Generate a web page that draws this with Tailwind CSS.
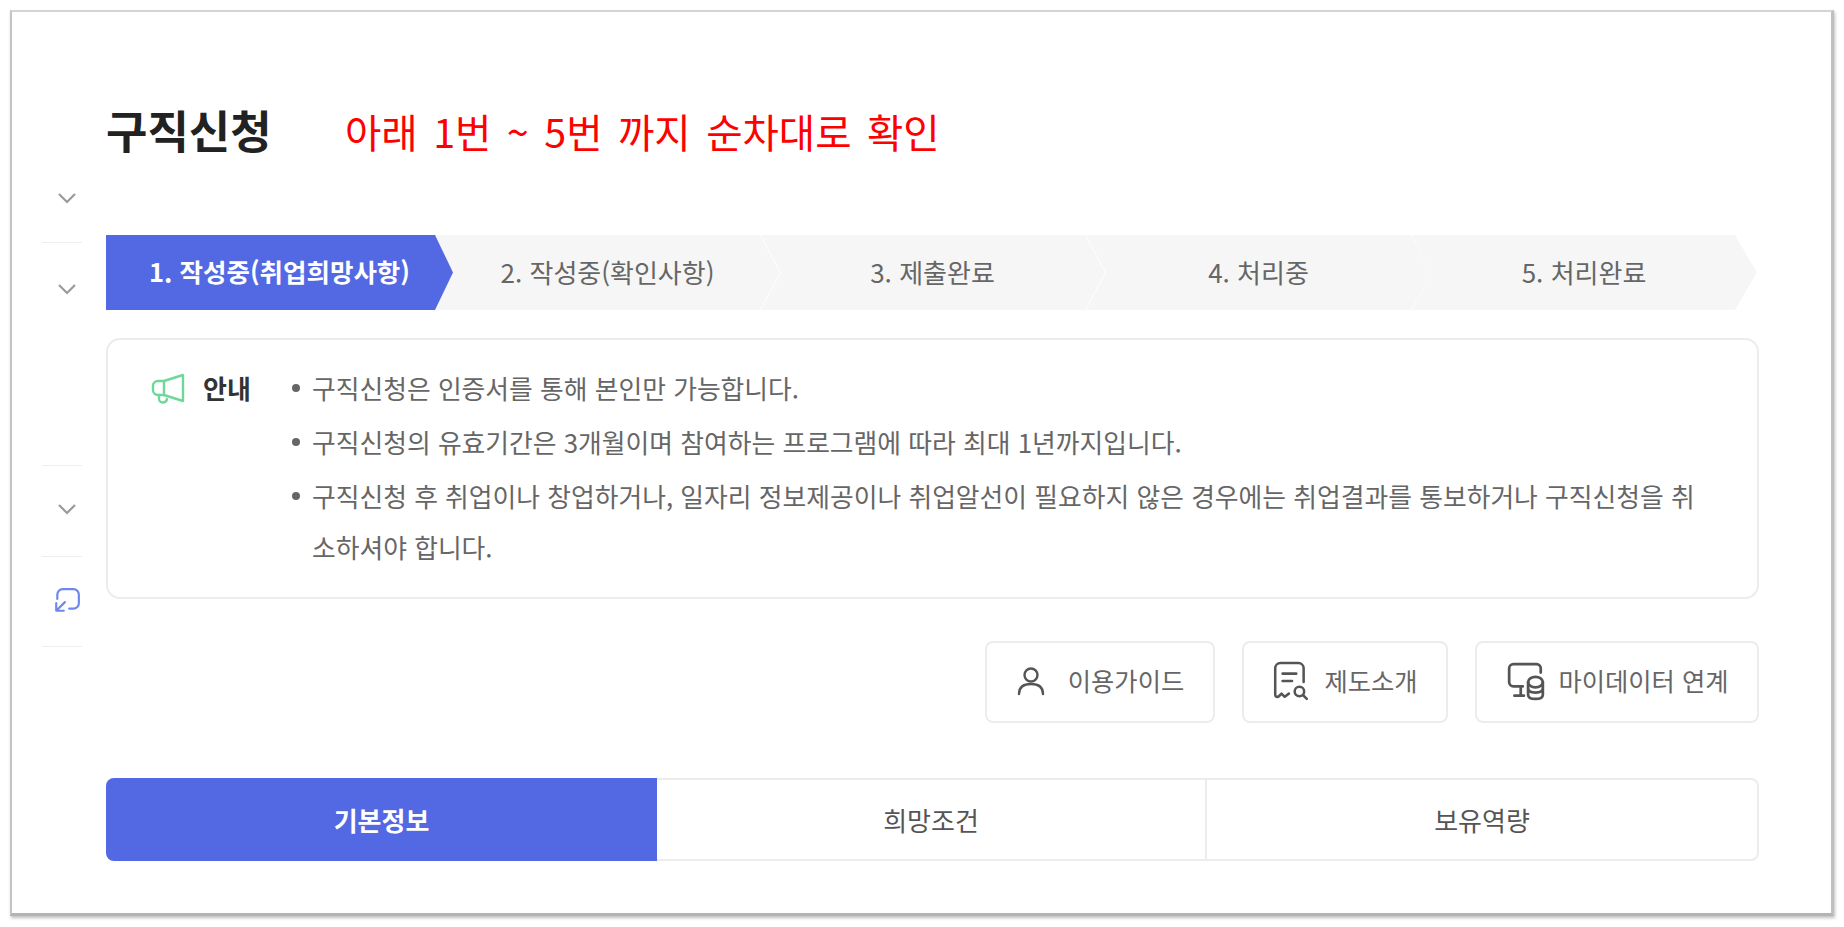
<!doctype html>
<html lang="ko">
<head>
<meta charset="utf-8">
<script src="https://cdn.jsdelivr.net/npm/@tailwindcss/browser@4"></script>
</head>
<body class="bg-white font-['Noto_Sans_CJK_KR','Noto_Sans',sans-serif]">
<div class="p-[10px] h-[927px] overflow-hidden">
  <div class="w-[1824px] h-[906px] bg-white border-t-2 border-l-2 border-r-[3px] border-b-[3px] border-t-[#d4d4d4] border-l-[#c4c4c4] border-r-[#c0c0c0] border-b-[#b4b4b4] shadow-[1px_2px_3px_rgba(0,0,0,0.25)] flex">
    <aside class="w-[40px] ml-[30px] mt-[140px] flex flex-col shrink-0">
      <div class="h-[91px] border-b border-[#eeeeee] flex justify-center pl-[9px] pt-[40px]">
        <svg class="w-[18px] h-[12px]" viewBox="0 0 18 12" fill="none" stroke="#9a9a9a" stroke-width="2.2"><path d="M1 2l8 8 8-8"/></svg>
      </div>
      <div class="h-[223px] border-b border-[#eeeeee] flex justify-center pl-[9px] pt-[40px]">
        <svg class="w-[18px] h-[12px]" viewBox="0 0 18 12" fill="none" stroke="#9a9a9a" stroke-width="2.2"><path d="M1 2l8 8 8-8"/></svg>
      </div>
      <div class="h-[91px] border-b border-[#eeeeee] flex justify-center pl-[9px] pt-[37px]">
        <svg class="w-[18px] h-[12px]" viewBox="0 0 18 12" fill="none" stroke="#9a9a9a" stroke-width="2.2"><path d="M1 2l8 8 8-8"/></svg>
      </div>
      <div class="h-[90px] border-b border-[#eeeeee] flex justify-center pl-[9px] pt-[30px]">
        <svg class="w-[28px] h-[27px]" viewBox="0 0 26 25" fill="none" stroke="#6f86ee" stroke-width="2" stroke-linecap="round" stroke-linejoin="round"><path d="M4 11V7a5 5 0 0 1 5-5h10a5 5 0 0 1 5 5v8a5 5 0 0 1-5 5h-4"/><path d="M11 14l-8 8M3 15v7h7"/></svg>
      </div>
    </aside>
    <main class="w-[1653px] ml-[24px] shrink-0">
      <div class="mt-[93px] h-[52px] flex items-center">
        <h1 class="w-[239px] text-[45px] leading-[52px] font-semibold text-[#222222] -mt-[2px]">구직신청</h1>
        <p class="text-[39.5px] leading-[52px] text-[#ff0000] whitespace-nowrap [word-spacing:4.4px]">아래 1번 ~ 5번 까지 순차대로 확인</p>
      </div>
      <ol class="mt-[78px] h-[75px] flex text-[26px] text-[#666666]">
        <li class="relative z-[5] w-[347px] pb-[2px] flex items-center justify-center bg-[#5369e3] text-white text-[25.5px] font-bold [clip-path:polygon(0_0,329px_0,100%_50%,329px_100%,0_100%)]">1. 작성중(취업희망사항)</li>
        <li class="relative z-[4] w-[345px] -ml-[18px] pb-[2px] flex items-center justify-center bg-[#f6f6f6] [clip-path:polygon(0_0,325px_0,100%_50%,325px_100%,0_100%)]">2. 작성중(확인사항)</li>
        <li class="relative z-[3] w-[345px] -ml-[20px] pb-[2px] flex items-center justify-center bg-[#f6f6f6] [clip-path:polygon(0_0,325px_0,100%_50%,325px_100%,0_100%)]"><span>3. 제출완료</span>
          <svg class="absolute left-0 top-0 w-[22px] h-[75px]" viewBox="0 0 22 75" fill="none" stroke="#ffffff" stroke-width="1.5"><path d="M0 0l20 37.5L0 75"/></svg></li>
        <li class="relative z-[2] w-[347px] -ml-[20px] pb-[2px] flex items-center justify-center bg-[#f6f6f6] [clip-path:polygon(0_0,326px_0,100%_50%,326px_100%,0_100%)]"><span>4. 처리중</span>
          <svg class="absolute left-0 top-0 w-[22px] h-[75px]" viewBox="0 0 22 75" fill="none" stroke="#ffffff" stroke-width="1.5"><path d="M0 0l20 37.5L0 75"/></svg></li>
        <li class="relative z-[1] w-[346px] -ml-[21px] pb-[2px] flex items-center justify-center bg-[#f6f6f6] [clip-path:polygon(0_0,324px_0,100%_50%,324px_100%,0_100%)]"><span>5. 처리완료</span>
          <svg class="absolute left-0 top-0 w-[22px] h-[75px]" viewBox="0 0 22 75" fill="none" stroke="#ffffff" stroke-width="1.5"><path d="M0 0l20 37.5L0 75"/></svg></li>
      </ol>
      <section class="mt-[28px] h-[261px] border-2 border-[#ececec] rounded-[14px] flex pt-[22px]">
        <div class="w-[184px] shrink-0 flex items-start pl-[42px] h-[51px]">
          <svg class="w-[36px] h-[36px] mt-[10px]" viewBox="0 0 36 36" fill="none" stroke="#6fd79a" stroke-width="2.4" stroke-linejoin="round" stroke-linecap="round"><path d="M33 3v26L14 23H8a5 5 0 0 1-5-5v-4a5 5 0 0 1 5-5h6z"/><path d="M14 9v14M9 23v3a4 4 0 0 0 8 1"/></svg>
          <strong class="ml-[17px] text-[26px] leading-[51px] font-bold text-[#333333]">안내</strong>
        </div>
        <ul class="flex-1 pr-[50px] text-[25.8px] leading-[51px] text-[#666666] flex flex-col gap-[3px]">
          <li class="relative pl-[20px] before:content-[''] before:absolute before:left-0 before:top-[22px] before:w-[8px] before:h-[8px] before:rounded-full before:bg-[#666666]">구직신청은 인증서를 통해 본인만 가능합니다.</li>
          <li class="relative pl-[20px] before:content-[''] before:absolute before:left-0 before:top-[22px] before:w-[8px] before:h-[8px] before:rounded-full before:bg-[#666666]">구직신청의 유효기간은 3개월이며 참여하는 프로그램에 따라 최대 1년까지입니다.</li>
          <li class="relative pl-[20px] before:content-[''] before:absolute before:left-0 before:top-[22px] before:w-[8px] before:h-[8px] before:rounded-full before:bg-[#666666]">구직신청 후 취업이나 창업하거나, 일자리 정보제공이나 취업알선이 필요하지 않은 경우에는 취업결과를 통보하거나 구직신청을 취소하셔야 합니다.</li>
        </ul>
      </section>
      <div class="mt-[42px] flex justify-end gap-[27px] text-[25.3px] text-[#666666]">
        <a class="w-[230px] h-[82px] pb-[2px] border-2 border-[#ececec] rounded-[8px] flex items-center justify-center gap-[22px]">
          <svg class="w-[30px] h-[30px]" viewBox="0 0 30 30" fill="none" stroke="#555555" stroke-width="2.4" stroke-linecap="round"><circle cx="15" cy="9" r="6.5"/><path d="M3 28c0-7 5-10 12-10s12 3 12 10"/></svg>
          이용가이드
        </a>
        <a class="w-[206px] h-[82px] pb-[2px] border-2 border-[#ececec] rounded-[8px] flex items-center justify-center gap-[14px]">
          <svg class="w-[38px] h-[40px]" viewBox="0 0 36 38" fill="none" stroke="#555555" stroke-width="2.4" stroke-linecap="round" stroke-linejoin="round"><path d="M30 20V7a5 5 0 0 0-5-5H8a5 5 0 0 0-5 5v25c0 2 2 3 4 1l2-2 3 3 4-3"/><path d="M10 12h13M10 19h9"/><circle cx="26" cy="29" r="4.5"/><path d="M30 33l3 3"/></svg>
          제도소개
        </a>
        <a class="w-[284px] h-[82px] pb-[2px] border-2 border-[#ececec] rounded-[8px] flex items-center justify-center gap-[13px]">
          <svg class="w-[40px] h-[40px]" viewBox="0 0 38 38" fill="none" stroke="#555555" stroke-width="2.6" stroke-linecap="round" stroke-linejoin="round"><path d="M33 11V7a4 4 0 0 0-4-4H7a4 4 0 0 0-4 4v13a4 4 0 0 0 4 4h9M14 25v7M8 33h9"/><ellipse cx="28" cy="20" rx="7" ry="5"/><path d="M21 20v12c0 3 3 4 7 4s7-1 7-4V20M21 26c0 3 3 4 7 4s7-1 7-4"/></svg>
          마이데이터 연계
        </a>
      </div>
      <nav class="mt-[55px] h-[83px] grid grid-cols-[549px_548px_1fr] border-2 border-[#ececec] rounded-[8px] text-[26px] text-[#555555]">
        <a class="-m-[2px] mr-0 bg-[#5369e3] rounded-l-[8px] text-white font-bold flex items-center justify-center">기본정보</a>
        <a class="flex items-center justify-center">희망조건</a>
        <a class="flex items-center justify-center border-l-2 border-[#ececec]">보유역량</a>
      </nav>
    </main>
  </div>
</div>
</body>
</html>
